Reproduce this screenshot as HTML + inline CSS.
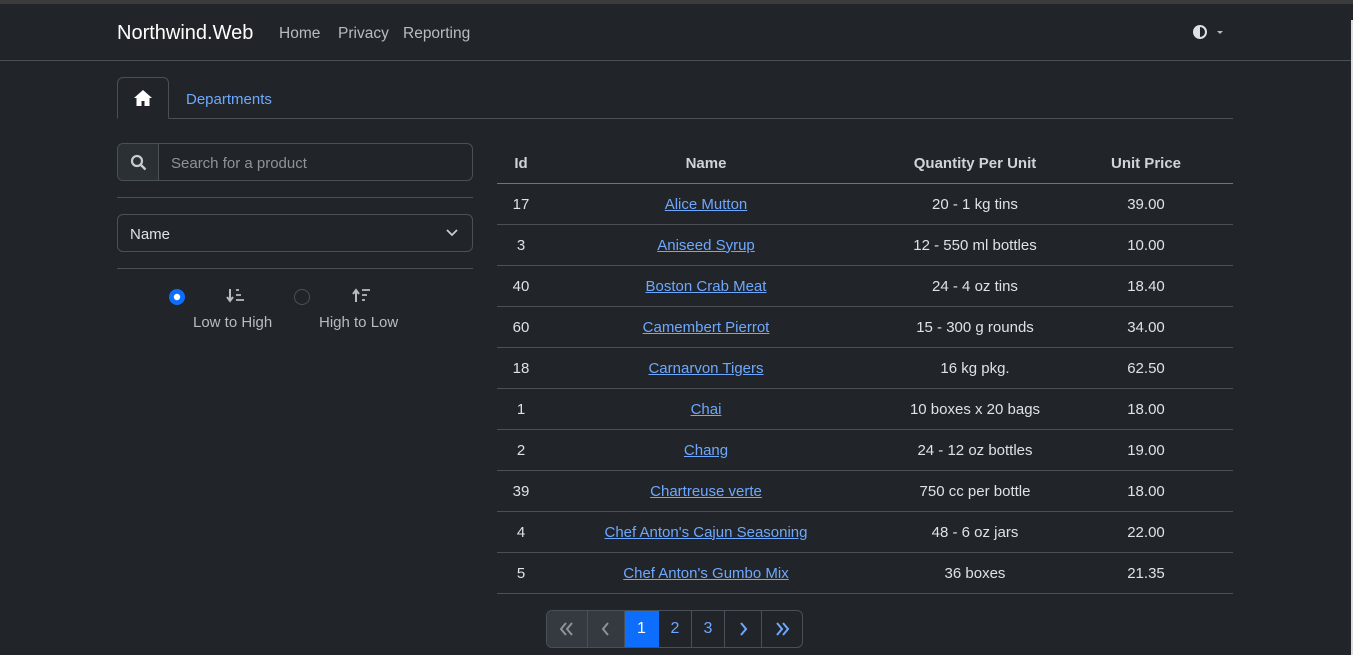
<!DOCTYPE html>
<html><head><meta charset="utf-8"><style>
*{box-sizing:border-box;margin:0;padding:0}
body{width:1353px;height:655px;overflow:hidden;background:#212529;color:#dee2e6;font-family:"Liberation Sans",sans-serif;font-size:15px;position:relative}
.top{position:absolute;left:0;top:0;width:1353px;height:4px;background:#3c3c3c}
.sb{position:absolute;right:0;top:20px;width:2px;height:635px;background:#ddd}
.nav{position:absolute;left:0;top:4px;width:1351px;height:57px;border-bottom:1px solid #495057}
.brand{position:absolute;left:117px;top:18px;font-size:20px;color:#fff}
.nl{position:absolute;top:21px;color:#b8bcc0;font-size:15.5px}
.tabs{position:absolute;left:117px;top:77px;width:1116px;height:42px;border-bottom:1px solid #495057}
.hometab{position:absolute;left:0;top:0;width:52px;height:42px;border:1px solid #495057;border-bottom:1px solid #212529;border-radius:6px 6px 0 0}
.dept{position:absolute;left:69px;top:14px;color:#6ea8fe;font-size:15px}
.search{position:absolute;left:117px;top:143px;width:356px;height:38px;border:1px solid #495057;border-radius:6px}
.search .ic{position:absolute;left:0;top:0;width:41px;height:36px;background:#2b3035;border-right:1px solid #495057;border-radius:6px 0 0 6px}
.search span{position:absolute;left:53px;top:11px;color:#8d9399}
.hr{position:absolute;left:117px;width:356px;height:1px;background:#495057}
.sel{position:absolute;left:117px;top:214px;width:356px;height:38px;border:1px solid #495057;border-radius:6px}
.sel span{position:absolute;left:12px;top:11px}
.lbl{position:absolute;top:314px;color:#b8bcc0;font-size:15px}
table{position:absolute;left:497px;top:143px;width:736px;border-collapse:collapse}
th{height:40px;font-weight:bold;color:#d0d4d8;border-bottom:1px solid #6c757d;text-align:center;font-size:15px;padding-top:2px}
td{height:41px;border-bottom:1px solid #495057;text-align:center;color:#dee2e6;font-size:15px;padding-top:1px}
td a{color:#6ea8fe;text-decoration:underline}
.pg{position:absolute;left:546px;top:610px;height:38px;display:flex;border:1px solid #495057;border-radius:6px;overflow:hidden}
.pg div{height:36px;border-right:1px solid #495057;display:flex;align-items:center;justify-content:center;color:#6ea8fe;font-size:16px}
.pg div:last-child{border-right:none}
.pg .d{background:#343a40;color:#8d9399}
.pg .a{background:#0d6efd;color:#fff;border-color:#0d6efd}
</style></head><body>
<div class="top"></div><div class="sb"></div>
<div class="nav">
<div class="brand">Northwind.Web</div>
<div class="nl" style="left:279px">Home</div>
<div class="nl" style="left:338px">Privacy</div>
<div class="nl" style="left:403px">Reporting</div>
<svg style="position:absolute;left:1192px;top:20px" width="32" height="16" viewBox="0 0 32 16"><circle cx="8" cy="8" r="7" fill="#dee2e6"/><path d="M8 3a5 5 0 0 1 0 10z" fill="#212529"/><path d="M25 7h6l-3 3z" fill="#b8bcc0"/></svg>
</div>
<div class="tabs"><div class="hometab"><svg style="position:absolute;left:15px;top:11px" width="20" height="18" viewBox="0 0 20 18"><path d="M10 1L1 9h2.5v8h5v-5h3v5h5V9H19z" fill="#fff"/></svg></div><div class="dept">Departments</div></div>
<div class="search"><div class="ic"><svg style="position:absolute;left:12px;top:10px" width="17" height="17" viewBox="0 0 17 17"><circle cx="7" cy="7" r="5" fill="none" stroke="#c8ccd0" stroke-width="2.2"/><path d="M10.5 10.5l5 5" stroke="#c8ccd0" stroke-width="2.4"/></svg></div><span>Search for a product</span></div>
<div class="hr" style="top:197px"></div>
<div class="sel"><span>Name</span><svg style="position:absolute;right:14px;top:14px" width="12" height="8" viewBox="0 0 12 8"><path d="M1 1l5 5 5-5" fill="none" stroke="#c8ccd0" stroke-width="1.8"/></svg></div>
<div class="hr" style="top:268px"></div>
<svg style="position:absolute;left:168px;top:288px" width="18" height="18"><circle cx="9" cy="9" r="8" fill="#0d6efd"/><circle cx="9" cy="9" r="3.2" fill="#fff"/></svg>
<svg style="position:absolute;left:293px;top:288px" width="18" height="18"><circle cx="9" cy="9" r="7.5" fill="none" stroke="#495057"/></svg>
<svg style="position:absolute;left:226px;top:288px" width="20" height="16" viewBox="0 0 20 16"><path d="M4 1v11M1 9l3 4 3-4" fill="none" stroke="#b8bcc0" stroke-width="2"/><path d="M10 2h3M10 7h5M10 12h8" stroke="#b8bcc0" stroke-width="1.8"/></svg>
<svg style="position:absolute;left:352px;top:288px" width="20" height="16" viewBox="0 0 20 16"><path d="M4 14V3M1 6l3-4 3 4" fill="none" stroke="#b8bcc0" stroke-width="2"/><path d="M10 2h8M10 7h5M10 12h3" stroke="#b8bcc0" stroke-width="1.8"/></svg>
<div class="lbl" style="left:193px">Low to High</div>
<div class="lbl" style="left:319px">High to Low</div>
<table>
<tr><th style="width:48px">Id</th><th style="width:322px">Name</th><th style="width:216px">Quantity Per Unit</th><th style="width:150px;padding-right:24px">Unit Price</th></tr>
<tr><td>17</td><td><a>Alice Mutton</a></td><td>20 - 1 kg tins</td><td style="padding-right:24px">39.00</td></tr>
<tr><td>3</td><td><a>Aniseed Syrup</a></td><td>12 - 550 ml bottles</td><td style="padding-right:24px">10.00</td></tr>
<tr><td>40</td><td><a>Boston Crab Meat</a></td><td>24 - 4 oz tins</td><td style="padding-right:24px">18.40</td></tr>
<tr><td>60</td><td><a>Camembert Pierrot</a></td><td>15 - 300 g rounds</td><td style="padding-right:24px">34.00</td></tr>
<tr><td>18</td><td><a>Carnarvon Tigers</a></td><td>16 kg pkg.</td><td style="padding-right:24px">62.50</td></tr>
<tr><td>1</td><td><a>Chai</a></td><td>10 boxes x 20 bags</td><td style="padding-right:24px">18.00</td></tr>
<tr><td>2</td><td><a>Chang</a></td><td>24 - 12 oz bottles</td><td style="padding-right:24px">19.00</td></tr>
<tr><td>39</td><td><a>Chartreuse verte</a></td><td>750 cc per bottle</td><td style="padding-right:24px">18.00</td></tr>
<tr><td>4</td><td><a>Chef Anton's Cajun Seasoning</a></td><td>48 - 6 oz jars</td><td style="padding-right:24px">22.00</td></tr>
<tr><td>5</td><td><a>Chef Anton's Gumbo Mix</a></td><td>36 boxes</td><td style="padding-right:24px">21.35</td></tr>
</table>
<div class="pg">
<div class="d" style="width:41px"><svg width="16" height="14" viewBox="0 0 16 14"><path d="M7 1L2 7l5 6M13 1L8 7l5 6" fill="none" stroke="#8d9399" stroke-width="2"/></svg></div>
<div class="d" style="width:37px"><svg width="10" height="14" viewBox="0 0 10 14"><path d="M7 1L2 7l5 6" fill="none" stroke="#8d9399" stroke-width="2"/></svg></div>
<div class="a" style="width:34px">1</div>
<div style="width:33px">2</div>
<div style="width:33px">3</div>
<div style="width:37px"><svg width="10" height="14" viewBox="0 0 10 14"><path d="M3 1l5 6-5 6" fill="none" stroke="#6ea8fe" stroke-width="2"/></svg></div>
<div style="width:40px"><svg width="16" height="14" viewBox="0 0 16 14"><path d="M3 1l5 6-5 6M9 1l5 6-5 6" fill="none" stroke="#6ea8fe" stroke-width="2"/></svg></div>
</div>
</body></html>
